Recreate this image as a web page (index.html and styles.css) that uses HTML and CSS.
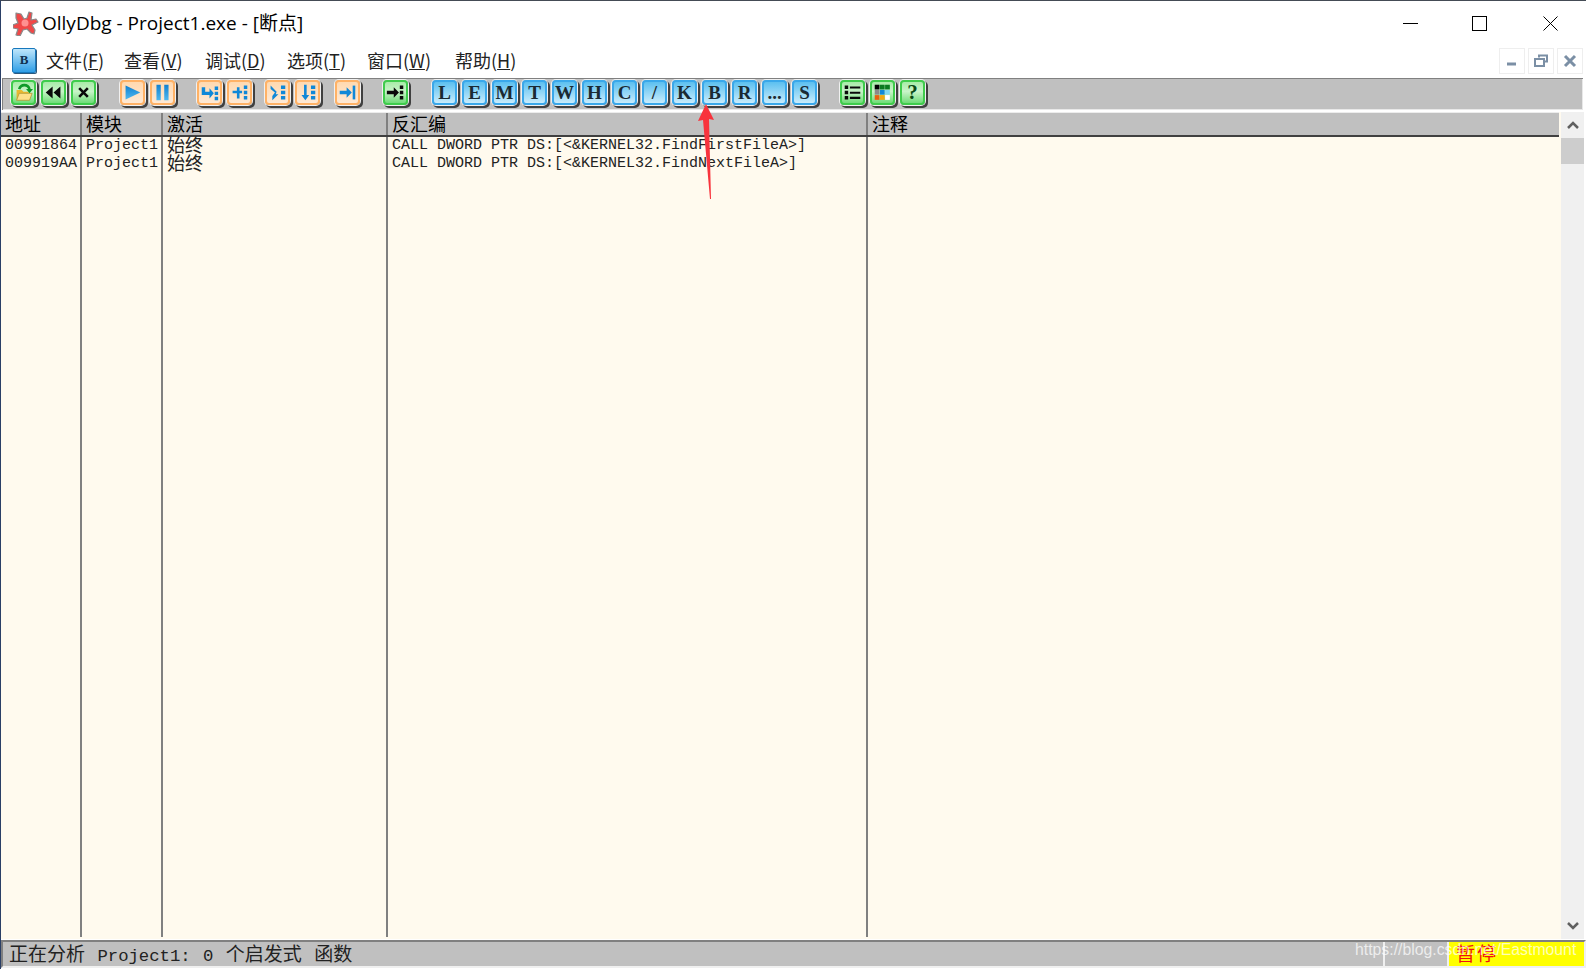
FILE: index.html
```html
<!DOCTYPE html>
<html lang="zh">
<head>
<meta charset="utf-8">
<title>OllyDbg - Project1.exe - [断点]</title>
<link rel="stylesheet" href="styles.css">
</head>
<body>
<div class="window">
  <header class="titlebar">
    <svg class="app-icon" viewBox="0 0 26 26"><path d="M3 3l5 1 3 5 3-1 2-6 3 1-1 7 5-1 2 3-6 3 3 5-1 4-3-1-4-4-4 1-3 6-4-1 2-6-5-1 0-3 5-2-2-5z" fill="#f04848" stroke="#8a8a8a" stroke-width="1.2" stroke-linejoin="round"/><circle cx="12" cy="13" r="3.5" fill="#ff9090"/></svg>
    <span class="title-text">OllyDbg - Project1.exe - [断点]</span>
    <div class="win-controls">
      <svg class="win-btn" viewBox="0 0 15 15"><path d="M0 7.500h15" stroke="#000" fill="none"/></svg>
      <svg class="win-btn" viewBox="0 0 15 15"><rect x=".5" y=".5" width="14" height="14" stroke="#000" fill="none"/></svg>
      <svg class="win-btn win-close" viewBox="0 0 15 15"><path d="M.5.5l14 14M14.500.5l-14 14" stroke="#000" fill="none"/></svg>
    </div>
  </header>

  <nav class="menubar">
    <span class="mdi-icon">B</span>
    <span class="menu-item m1">文件(<u>F</u>)</span>
    <span class="menu-item m2">查看(<u>V</u>)</span>
    <span class="menu-item m3">调试(<u>D</u>)</span>
    <span class="menu-item m4">选项(<u>T</u>)</span>
    <span class="menu-item m5">窗口(<u>W</u>)</span>
    <span class="menu-item m6">帮助(<u>H</u>)</span>
    <div class="mdi-controls">
      <span class="mdi-btn"><svg viewBox="0 0 14 14"><path d="M2 10h9" stroke="#7b8fa5" stroke-width="3" fill="none"/></svg></span>
      <span class="mdi-btn"><svg viewBox="0 0 14 14"><path d="M5 3.500V1.500h8v6h-3M1 5h9v7H1z" stroke="#7b8fa5" stroke-width="2" fill="none"/></svg></span>
      <span class="mdi-btn"><svg viewBox="0 0 14 14"><path d="M2 2l10 10M12 2L2 12" stroke="#7b8fa5" stroke-width="3" fill="none"/></svg></span>
    </div>
  </nav>

  <div class="toolbar">
    <span class="tb green">
      <svg viewBox="0 0 22 22"><path d="M3 8h6l2 2h6v2H6l-3 8z" fill="#e8b830"/><path d="M6 12h15l-3 8H3z" fill="#fde08a" stroke="#b08a20" stroke-width=".8"/><path d="M6 7c2-6 10-6 12 0" fill="none" stroke="#109a28" stroke-width="3"/><path d="M14 7h8l-4 5z" fill="#109a28"/></svg>
    </span>
    <span class="tb green"><svg viewBox="0 0 22 22"><path d="M10 4v14l-8-7zM19 4v14l-8-7z" fill="#0a0a0a"/></svg></span>
    <span class="tb green gap-x"><svg viewBox="0 0 22 22"><path d="M6 6l10 10M16 6L6 16" stroke="#0a0a0a" stroke-width="3"/></svg></span>

    <span class="tb orange"><svg viewBox="0 0 22 22"><defs><linearGradient id="bl" x1="0" y1="0" x2="0" y2="1"><stop offset="0" stop-color="#1080d0"/><stop offset="1" stop-color="#50b8f0"/></linearGradient></defs><path d="M3 3l17 8-17 8z" fill="url(#bl)"/></svg></span>
    <span class="tb orange gap-p"><svg viewBox="0 0 22 22"><path d="M4 2h5v18H4zM13 2h5v18h-5z" fill="url(#bl)"/></svg></span>

    <span class="tb orange"><svg viewBox="0 0 22 22"><path d="M2 5h4v5h5V6l5 6-5 6v-4H2z" fill="#1088d8"/><path d="M17 4h4v4h-4zM17 10h4v4h-4zM17 16h4v4h-4z" fill="#1088d8"/></svg></span>
    <span class="tb orange gap-s"><svg viewBox="0 0 22 22"><path d="M3 9h5V5h3v4h3v3h-3v6H8v-6H3z" fill="#1088d8"/><path d="M16 3h4v4h-4zM16 9h4v4h-4zM16 15h4v4h-4z" fill="#1088d8"/></svg></span>

    <span class="tb orange"><svg viewBox="0 0 22 22"><path d="M3 3l7 7-1 3 3 0-7 7v-5l3-4-5-4z" fill="#1088d8"/><path d="M15 3h5v4h-5zM15 9h5v4h-5zM15 15h5v4h-5z" fill="#1088d8"/></svg></span>
    <span class="tb orange gap-m"><svg viewBox="0 0 22 22"><path d="M7 2h3v12h3l-4.500 6L4 14h3z" fill="#1088d8"/><path d="M15 3h5v4h-5zM15 9h5v4h-5zM15 15h5v4h-5z" fill="#1088d8"/></svg></span>

    <span class="tb orange gap-l"><svg viewBox="0 0 22 22"><path d="M2 9h8V5l6 6-6 6v-4H2z" fill="#1088d8"/><path d="M17 3h3v16h-3z" fill="#1088d8"/></svg></span>

    <span class="tb green gap-x"><svg viewBox="0 0 22 22"><path d="M1 9h8V5l6 6-6 6v-4H1z" fill="#0a0a0a"/><path d="M16 3h4v4h-4zM16 9h4v4h-4zM16 15h4v4h-4z" fill="#0a0a0a"/></svg></span>

    <span class="tb blue">L</span>
    <span class="tb blue">E</span>
    <span class="tb blue">M</span>
    <span class="tb blue">T</span>
    <span class="tb blue">W</span>
    <span class="tb blue">H</span>
    <span class="tb blue">C</span>
    <span class="tb blue">/</span>
    <span class="tb blue">K</span>
    <span class="tb blue">B</span>
    <span class="tb blue">R</span>
    <span class="tb blue">...</span>
    <span class="tb blue gap-l">S</span>

    <span class="tb green"><svg viewBox="0 0 22 22"><path d="M2 3h4v4H2zM2 9h4v4H2zM2 15h4v4H2zM8 4h12v2.500H8zM8 10h12v2.500H8zM8 16h12v2.500H8z" fill="#0a0a0a"/></svg></span>
    <span class="tb green"><svg viewBox="0 0 22 22"><rect x="2" y="2" width="5.500" height="5.500" fill="#000"/><rect x="8" y="2" width="5.500" height="5.500" fill="#0a7a20"/><rect x="14" y="2" width="5.500" height="5.500" fill="#0a7a20"/><rect x="2" y="8" width="5.500" height="5.500" fill="#8a8a8a"/><rect x="8" y="8" width="5.500" height="5.500" fill="#1088d8"/><rect x="14" y="8" width="5.500" height="5.500" fill="#80d8f0"/><rect x="2" y="14" width="5.500" height="5.500" fill="#e86010"/><rect x="8" y="14" width="5.500" height="5.500" fill="#f0a810"/><rect x="14" y="14" width="5.500" height="5.500" fill="#fff"/></svg></span>
    <span class="tb green help">?</span>
  </div>

  <main class="pane">
    <div class="table">
      <div class="thead">
        <span class="col c1">地址</span>
        <span class="col c2">模块</span>
        <span class="col c3">激活</span>
        <span class="col c4">反汇编</span>
        <span class="col c5">注释</span>
      </div>
      <div class="tbody">
        <div class="grid-col c1"><div class="cell mono">00991864</div><div class="cell mono">009919AA</div></div>
        <div class="grid-col c2"><div class="cell mono">Project1</div><div class="cell mono">Project1</div></div>
        <div class="grid-col c3"><div class="cell">始终</div><div class="cell">始终</div></div>
        <div class="grid-col c4"><div class="cell mono">CALL DWORD PTR DS:[&lt;&amp;KERNEL32.FindFirstFileA&gt;]</div><div class="cell mono">CALL DWORD PTR DS:[&lt;&amp;KERNEL32.FindNextFileA&gt;]</div></div>
        <div class="grid-col c5"></div>
      </div>
    </div>
    <div class="scrollbar">
      <svg class="chev" viewBox="0 0 14 10"><path d="M2 8l5-5 5 5" stroke="#606060" stroke-width="2.500" fill="none"/></svg>
      <div class="thumb"></div>
      <div class="track"></div>
      <svg class="chev" viewBox="0 0 14 10"><path d="M2 2l5 5 5-5" stroke="#606060" stroke-width="2.500" fill="none"/></svg>
    </div>
  </main>

  <footer class="statusbar">
    <span class="st-main">正在分析<span class="mono"> Project1: 0 </span>个启发式<span class="mono"> </span>函数</span>
    <span class="st-small"></span>
    <span class="st-state">暂停</span>
  </footer>

  <svg class="arrow" viewBox="0 0 20 96"><path d="M10 0L18 16 13 15 15 95 14 95 7 16 2 17z" fill="#f8333c"/></svg>
  <span class="watermark">https://blog.csdn.net/Eastmount</span>
</div>
</body>
</html>
```

FILE: styles.css
```css
* { box-sizing: border-box; }
html, body { margin: 0; padding: 0; height: 100%; overflow: hidden; background: #fff; }
.window {
  position: relative;
  width: 1586px;
  height: 969px;
  display: flex;
  flex-direction: column;
  border-top: 1px solid #444b55;
  border-left: 1px solid #2a3f66;
  font-family: "Noto Sans CJK SC", "Noto Sans", sans-serif;
  color: #000;
  overflow: hidden;
}
.titlebar {
  height: 43px;
  flex: none;
  display: flex;
  align-items: center;
  padding-left: 12px;
  background: #fff;
}
.app-icon { width: 26px; height: 26px; flex: none; }
.title-text {
  margin-left: 3px;
  margin-bottom: 2px;
  font-family: "Open Sans", "Noto Sans CJK SC", sans-serif;
  font-size: 19px;
  white-space: nowrap;
}
.win-controls {
  margin-left: auto;
  margin-right: 28px;
  margin-top: 2px;
  display: flex;
  gap: 54px;
  align-items: center;
}
.win-btn { width: 15px; height: 15px; display: block; }
.win-close { margin-left: 2px; }

.menubar {
  height: 33px;
  flex: none;
  display: flex;
  align-items: center;
  padding: 0 3px 0 11px;
  background: #fff;
  font-size: 18px;
}
.mdi-icon {
  width: 24px;
  height: 25px;
  margin-right: 10px;
  background: linear-gradient(#bfe6fb, #2f9ee6);
  border: 1px solid #1778bd;
  border-radius: 2px;
  box-shadow: 1px 1px 0 #2b5a7f;
  color: #10304f;
  font: bold 13px "Liberation Serif", serif;
  text-align: center;
  line-height: 22px;
}
.menu-item {
  margin-bottom: 2px;
  color: #222;
  white-space: nowrap;
}
.m1 { width: 78px; }
.m2 { width: 81px; }
.m3 { width: 82px; }
.m4 { width: 80px; }
.m5 { width: 88px; }
.m6 { width: 62px; }
.menu-item u { text-decoration-thickness: 1px; }
.mdi-controls { margin-left: auto; display: flex; gap: 3px; }
.mdi-btn {
  width: 26px;
  height: 26px;
  border: 1px solid #eeeeee;
  display: flex;
  align-items: center;
  justify-content: center;
}
.mdi-btn svg { width: 14px; height: 14px; }

.toolbar {
  height: 34px;
  flex: none;
  display: flex;
  align-items: flex-start;
  padding: 2px 0 0 9px;
  margin-right: 2px;
  background: #c0c0c0;
  border: 1px solid #fff;
  box-shadow: inset 1px 1px 0 #808080, inset -1px -1px 0 #e8e8e8;
}
.tb {
  width: 25px;
  height: 25px;
  margin-right: 5px;
  flex: none;
  display: flex;
  align-items: center;
  justify-content: center;
  border: 2px solid;
  border-radius: 4px;
  box-shadow: 0 0 0 1px #f0f0f0, 2px 2px 0 1px #404040;
  font: bold 19px "Liberation Serif", serif;
  color: #1a2a33;
}
.tb svg { width: 19px; height: 19px; display: block; }
.green { border-color: #3fcc4c; background: linear-gradient(#a8eca8, #c8f4c8 45%, #6fdc78); }
.orange { border-color: #ffb266; background: linear-gradient(#ffd9b0, #ffe9d4); }
.blue { border-color: #3aa8ea; background: linear-gradient(#5cc0f0, #c8ecfc); }
.help { color: #0a4a14; font-size: 21px; }
.gap-s { margin-right: 13px; }
.gap-m { margin-right: 15px; }
.gap-l { margin-right: 23px; }
.gap-x { margin-right: 24px; }
.gap-p { margin-right: 22px; }

.pane {
  flex: 1;
  min-height: 0;
  display: flex;
  margin-right: 2px;
  background: #fffaee;
  border-top: 1px solid #fff;
}
.table { flex: 1; min-width: 0; display: flex; flex-direction: column; }
.thead {
  height: 25px;
  flex: none;
  display: flex;
  margin-right: 2px;
  background: #c0c0c0;
  border-bottom: 2px solid #404040;
  border-top: 1px solid #ececec;
  font-size: 18px;
  line-height: 20px;
}
.tbody { flex: 1; min-height: 0; display: flex; margin-bottom: 2px; }
.col, .grid-col { flex: none; padding-left: 4px; border-right: 2px solid #808080; }
.c1 { width: 81px; }
.c2 { width: 81px; }
.c3 { width: 225px; }
.c4 { width: 480px; }
.c5 { flex: 1; border-right: 0; }
.cell {
  height: 18px;
  line-height: 14px;
  font-size: 18px;
  white-space: nowrap;
  color: #222;
}
.mono { font-family: "Liberation Mono", "Noto Sans CJK SC", monospace; font-size: 15px; line-height: 18px; }
.scrollbar {
  width: 23px;
  flex: none;
  display: flex;
  flex-direction: column;
  align-items: center;
  background: #f0f0f0;
}
.chev { width: 14px; height: 10px; margin: 8px 0; flex: none; }
.thumb { width: 100%; height: 26px; background: #cdcdcd; flex: none; }
.track { flex: 1; }

.statusbar {
  height: 28px;
  flex: none;
  margin: 1px 0 1px 0;
  display: flex;
  background: #c0c0c0;
  border: 2px solid #f0f0f0;
  border-top-color: #808080;
  border-left-color: #808080;
  font-size: 19px;
  line-height: 22px;
}
.st-main { flex: 1; padding-left: 6px; white-space: pre; color: #222; }
.st-main .mono { font-size: 17.300px; line-height: 22px; word-spacing: 2px; }
.st-small { width: 66px; border-left: 2px solid #f0f0f0; border-right: 2px solid #f0f0f0; }
.st-state {
  width: 135px;
  padding-left: 7px;
  background: #ffff00;
  color: #f01010;
  letter-spacing: 2px;
}
.arrow {
  position: absolute;
  left: 695px;
  top: 103px;
  width: 20px;
  height: 96px;
}
.watermark {
  position: absolute;
  left: 1354px;
  top: 940px;
  font-family: "Liberation Sans", sans-serif;
  font-size: 15.800px;
  color: rgba(255, 255, 255, .72);
  white-space: nowrap;
}
```
